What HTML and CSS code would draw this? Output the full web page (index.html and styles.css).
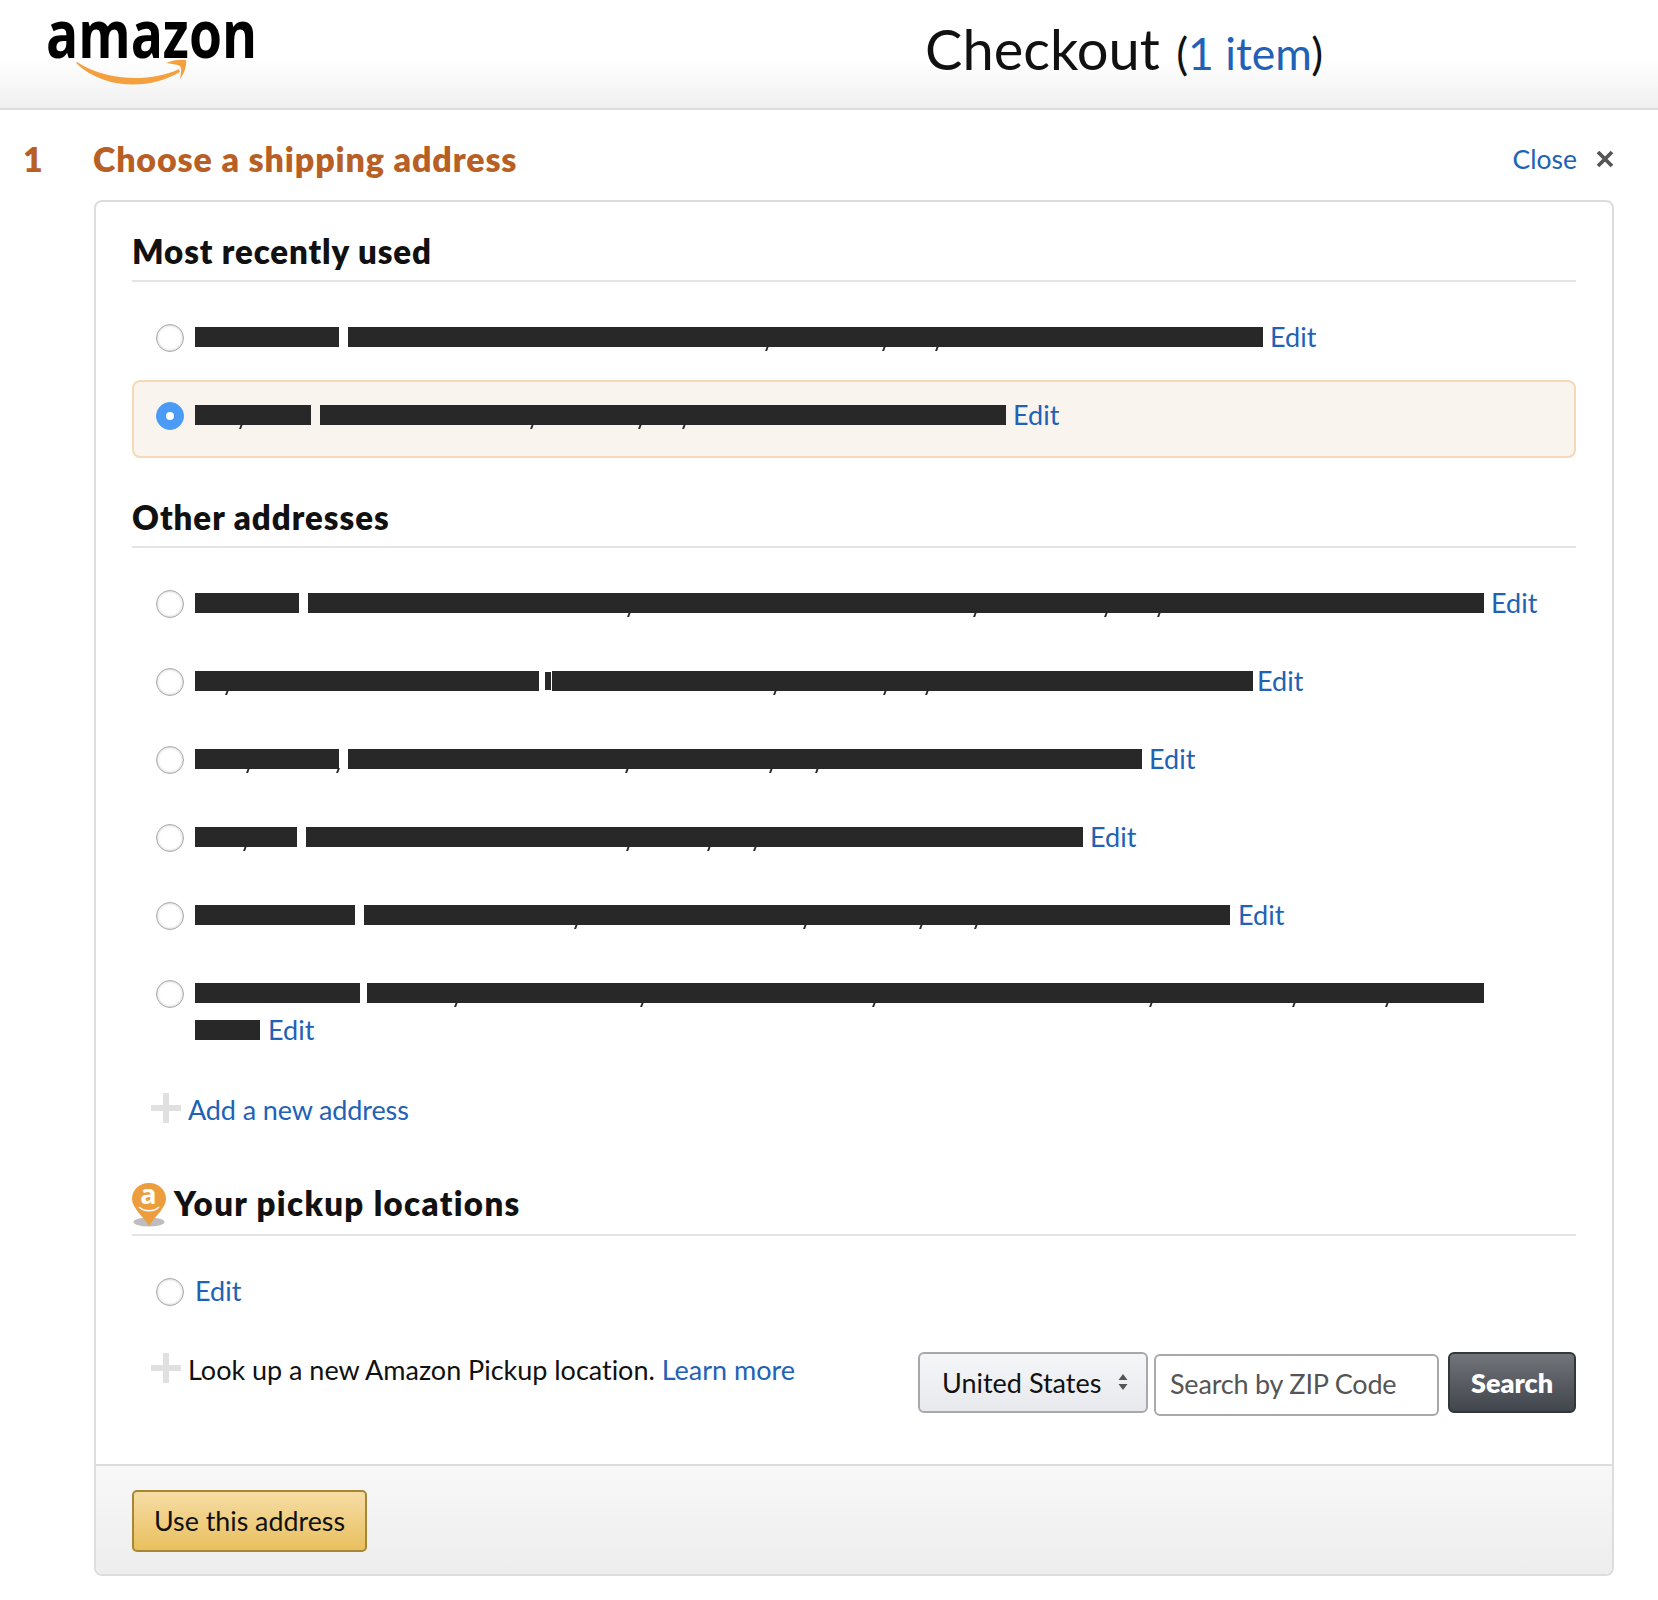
FILE: index.html
```html
<!DOCTYPE html>
<html lang="en">
<head>
<meta charset="utf-8">
<title>Checkout</title>
<link rel="stylesheet" href="styles.css">
</head>
<body>
<header class="topbar">
  <svg class="logo" width="270" height="88" viewBox="0 0 270 88" aria-label="amazon">
    <text x="46" y="58" class="logo-text" textLength="211" lengthAdjust="spacingAndGlyphs">amazon</text>
    <path d="M77 62 C105 81 150 83 179 69 L180 72 C150 90 104 90 76 63 Z" fill="#f5a03f"/>
    <path d="M166 63 C172 60 181 59 186 60 C187 66 184 74 180 79 C181 73 182 69 180 66 C176 64 171 64 166 63 Z" fill="#f5a03f"/>
  </svg>
  <h1 class="title">Checkout <span class="count">(<a>1 item</a>)</span></h1>
</header>

<div class="step">
  <span class="step-num">1</span>
  <span class="step-title">Choose a shipping address</span>
  <a class="close">Close</a>
  <svg class="close-x" width="18" height="18" viewBox="0 0 18 18"><path d="M2 2 L16 16 M16 2 L2 16" stroke="#555" stroke-width="3.8"/></svg>
</div>

<main class="card">
  <div class="content">
    <h2 class="section">Most recently used</h2>
    <div class="row">
      <span class="radio"></span>
      <div class="addr">
        <div class="line">
          <span class="bar"><i class="seg" style="width:144px"></i></span>
          <span class="bar"><i class="seg comma" style="width:420px"></i><i class="seg comma" style="width:117px"></i><i class="seg comma" style="width:53px"></i><i class="seg" style="width:325px"></i></span>
          <a class="edit">Edit</a>
        </div>
      </div>
    </div>
    <div class="row selected">
      <span class="radio on"></span>
      <div class="addr">
        <div class="line">
          <span class="bar"><i class="seg comma" style="width:47px"></i><i class="seg" style="width:69px"></i></span>
          <span class="bar"><i class="seg comma" style="width:213px"></i><i class="seg comma" style="width:108px"></i><i class="seg comma" style="width:44px"></i><i class="seg" style="width:321px"></i></span>
          <a class="edit">Edit</a>
        </div>
      </div>
    </div>

    <h2 class="section other">Other addresses</h2>
    <div class="row">
      <span class="radio"></span>
      <div class="addr">
        <div class="line">
          <span class="bar"><i class="seg" style="width:104px"></i></span>
          <span class="bar"><i class="seg comma" style="width:322px"></i><i class="seg comma" style="width:346px"></i><i class="seg comma" style="width:131px"></i><i class="seg comma" style="width:53px"></i><i class="seg" style="width:324px"></i></span>
          <a class="edit">Edit</a>
        </div>
      </div>
    </div>
    <div class="row">
      <span class="radio"></span>
      <div class="addr">
        <div class="line">
          <span class="bar nub-gap"><i class="seg comma" style="width:33px"></i><i class="seg" style="width:311px"></i></span>
          <span class="bar nub-gap"><i class="seg nub"></i></span>
          <span class="bar"><i class="seg comma" style="width:224px"></i><i class="seg comma" style="width:110px"></i><i class="seg comma" style="width:42px"></i><i class="seg" style="width:325px"></i></span>
          <a class="edit tight">Edit</a>
        </div>
      </div>
    </div>
    <div class="row">
      <span class="radio"></span>
      <div class="addr">
        <div class="line">
          <span class="bar"><i class="seg comma" style="width:54px"></i><i class="seg comma" style="width:90px"></i></span>
          <span class="bar"><i class="seg comma" style="width:280px"></i><i class="seg comma" style="width:144px"></i><i class="seg comma" style="width:46px"></i><i class="seg" style="width:324px"></i></span>
          <a class="edit">Edit</a>
        </div>
      </div>
    </div>
    <div class="row">
      <span class="radio"></span>
      <div class="addr">
        <div class="line">
          <span class="bar"><i class="seg comma" style="width:51px"></i><i class="seg" style="width:51px"></i></span>
          <span class="bar"><i class="seg comma" style="width:323px"></i><i class="seg comma" style="width:81px"></i><i class="seg comma" style="width:46px"></i><i class="seg" style="width:327px"></i></span>
          <a class="edit">Edit</a>
        </div>
      </div>
    </div>
    <div class="row">
      <span class="radio"></span>
      <div class="addr">
        <div class="line">
          <span class="bar"><i class="seg" style="width:160px"></i></span>
          <span class="bar"><i class="seg comma" style="width:213px"></i><i class="seg comma" style="width:229px"></i><i class="seg comma" style="width:116px"></i><i class="seg comma" style="width:55px"></i><i class="seg" style="width:253px"></i></span>
          <a class="edit nudge">Edit</a>
        </div>
      </div>
    </div>
    <div class="row two-line">
      <span class="radio"></span>
      <div class="addr">
        <div class="line">
          <span class="bar narrow-gap"><i class="seg" style="width:165px"></i></span>
          <span class="bar"><i class="seg comma" style="width:90px"></i><i class="seg comma" style="width:186px"></i><i class="seg comma" style="width:232px"></i><i class="seg comma" style="width:277px"></i><i class="seg comma" style="width:143px"></i><i class="seg comma" style="width:93px"></i><i class="seg" style="width:96px"></i></span>
        </div>
        <div class="line">
          <span class="bar"><i class="seg" style="width:65px"></i></span>
          <a class="edit nudge">Edit</a>
        </div>
      </div>
    </div>

    <div class="add">
      <span class="plus"></span>
      <a class="add-link">Add a new address</a>
    </div>

    <h2 class="section pickup">
      <svg class="pin" width="36" height="46" viewBox="0 0 36 46">
        <ellipse cx="18" cy="40" rx="15.500" ry="4.500" fill="#bdbdbd"/>
        <path d="M18 1 C8 1 1 8 1 17 C1 26 12 34 18 44 C24 34 35 26 35 17 C35 8 28 1 18 1 Z" fill="#ec9d3e"/>
        <text x="18" y="22" class="pin-a">a</text>
        <path d="M8 25 C13 30 23 30 28 25" stroke="#fff" stroke-width="1.600" fill="none"/>
      </svg>
      <span>Your pickup locations</span>
    </h2>
    <div class="row">
      <span class="radio"></span>
      <div class="addr">
        <div class="line"><a class="edit flush">Edit</a></div>
      </div>
    </div>

    <div class="lookup">
      <div class="lookup-text">
        <span class="plus"></span>
        <p class="lookup-copy"><span class="lookup-lead">Look up a new Amazon Pickup location.</span> <a>Learn more</a></p>
      </div>
      <div class="lookup-form">
        <div class="select">
          <span>United States</span>
          <svg width="12" height="20" viewBox="0 0 12 20"><path d="M6 2 L10.500 8 H1.500 Z M6 18 L1.500 12 H10.500 Z" fill="#555"/></svg>
        </div>
        <input class="zip" type="text" placeholder="Search by ZIP Code">
        <button class="search" type="button">Search</button>
      </div>
    </div>
  </div>
  <footer class="foot">
    <button class="use" type="button">Use this address</button>
  </footer>
</main>
</body>
</html>
```
FILE: styles.css
```css
* { box-sizing: border-box; }
html, body { margin: 0; padding: 0; background: #fff; }
body { font-family: Lato, "Noto Sans", sans-serif; color: #111; width: 1658px; height: 1600px; overflow: hidden; }
a { color: #2162b6; text-decoration: none; }
i { display: block; font-style: normal; }
svg { overflow: visible; }

.topbar { height: 110px; border-bottom: 2px solid #ddd; background: linear-gradient(#fff 55%, #f0f0f0); display: flex; position: relative; }
.logo { display: block; flex: none; }
.logo-text { font-family: "Open Sans", sans-serif; font-weight: 700; font-size: 67px; fill: #000; }
.title { margin: 0 0 0 655px; padding-top: 16px; font-size: 56px; line-height: 66px; font-weight: 400; color: #111; white-space: nowrap; }
.count { font-size: 44.5px; margin-left: 2px; }

.step { height: 90px; padding: 29px 44px 20px 23px; display: flex; align-items: flex-start; line-height: 40px; }
.step-num { width: 70px; font-size: 34px; font-weight: 800; color: #b85f26; }
.step-title { flex: 1; font-size: 34px; font-weight: 800; letter-spacing: 0.85px; color: #b85f26; }
.close { font-size: 26.5px; }
.close-x { margin: 11px 0 0 19px; flex: none; }

.card { margin-left: 94px; width: 1520px; height: 1376px; border: 2px solid #ddd; border-radius: 8px; overflow: hidden; display: flex; flex-direction: column; }
.content { flex: 1; padding: 0 36px; }

.section { margin: 0 0 20px; padding: 29px 0 9px; height: 80px; border-bottom: 2px solid #e4e4e4; font-size: 33px; line-height: 40px; font-weight: 800; letter-spacing: 0.9px; color: #111; }
.other { margin-top: 10px; letter-spacing: 1px; }
.pickup { margin-top: 23px; height: 82px; padding-bottom: 11px; display: flex; align-items: flex-start; letter-spacing: 1.35px; }
.pin { flex: none; margin: -1px 7px 0 -1px; display: block; }
.pin-a { font-family: "Open Sans", sans-serif; font-weight: 700; font-size: 27px; fill: #fff; text-anchor: middle; }

.row { height: 78px; border: 2px solid transparent; padding: 20px 0 0 22px; display: flex; align-items: flex-start; }
.row.two-line { height: 91px; }
.selected { background: #f9f4ee; border-color: #f5d9b8; border-radius: 8px; }
.radio { flex: none; width: 28px; height: 28px; border-radius: 50%; background: #fff; border: 1px solid #aaa; box-shadow: inset 0 0 3px #bbb; display: flex; align-items: center; justify-content: center; }
.radio.on { background: #4a9bf6; border-color: #4a9bf6; box-shadow: none; }
.radio.on::after { content: ""; width: 8px; height: 8px; border-radius: 50%; background: #fff; }

.addr { margin: -6px 0 0 11px; }
.line { display: flex; align-items: center; height: 37px; font-size: 27px; line-height: 37px; }
.bar { display: flex; margin-right: 9px; }
.bar.nub-gap { margin-right: 6px; }
.bar.nub-gap + .bar.nub-gap { margin-right: 1px; }
.bar.narrow-gap { margin-right: 7px; }
.seg { height: 20px; background: #282828; position: relative; }
.nub { width: 6px; height: 18px; }
.comma::after { content: ""; position: absolute; right: 0; bottom: -4px; width: 2px; height: 5px; background: #282828; transform: skewX(-20deg); }
.edit { margin-left: -2px; }
.edit.tight { margin-left: -5px; }
.edit.nudge { margin-left: -1px; }
.edit.flush { margin-left: 0; }

.add { display: flex; margin: 42px 0 0 19px; height: 40px; line-height: 38px; font-size: 27px; }
.plus { flex: none; width: 30px; height: 30px; margin-top: 2px; position: relative; }
.plus::before, .plus::after { content: ""; position: absolute; background: #e0e0e0; }
.plus::before { left: 0; right: 0; top: 12px; height: 6px; }
.plus::after { top: 0; bottom: 0; left: 12px; width: 6px; }
.add-link { margin-left: 7px; letter-spacing: -0.12px; }

.lookup { margin-top: 18px; display: flex; justify-content: space-between; align-items: flex-start; }
.lookup-text { display: flex; margin-left: 19px; }
.lookup-text .plus { margin-top: 1px; }
.lookup-copy { margin: 0 0 0 7px; font-size: 27px; line-height: 36px; color: #111; }
.lookup-lead { letter-spacing: -0.02px; }
.lookup-form { display: flex; align-items: flex-start; }
.select { width: 230px; height: 61px; border: 2px solid #a8a9ac; border-radius: 6px; background: linear-gradient(#f5f6f8, #e8e9ed); display: flex; align-items: center; justify-content: space-between; padding: 0 17px 0 22px; font-size: 27px; color: #111; }
.select svg { margin-top: -1px; }
.zip { width: 285px; height: 62px; margin: 2px 9px 0 6px; border: 2px solid #a9a9a9; border-radius: 6px; background: #fff; padding: 0 14px 4px; font: 27px Lato, "Noto Sans", sans-serif; letter-spacing: -0.2px; color: #555; outline: none; }
.zip::placeholder { color: #555; opacity: 1; }
.search { width: 128px; height: 61px; border: 2px solid #33363b; border-radius: 6px; background: linear-gradient(#71757a, #41454c); color: #fff; font: 800 27px Lato, "Noto Sans", sans-serif; padding: 0; }

.foot { height: 110px; border-top: 2px solid #ddd; background: linear-gradient(#f8f8f8, #ededed); padding: 24px 36px 0; }
.use { display: block; width: 235px; height: 62px; border: 2px solid #a88734; border-radius: 5px; background: linear-gradient(#f6dda5, #e9c05f); color: #111; font: 26.8px Lato, "Noto Sans", sans-serif; padding: 0; }
```
